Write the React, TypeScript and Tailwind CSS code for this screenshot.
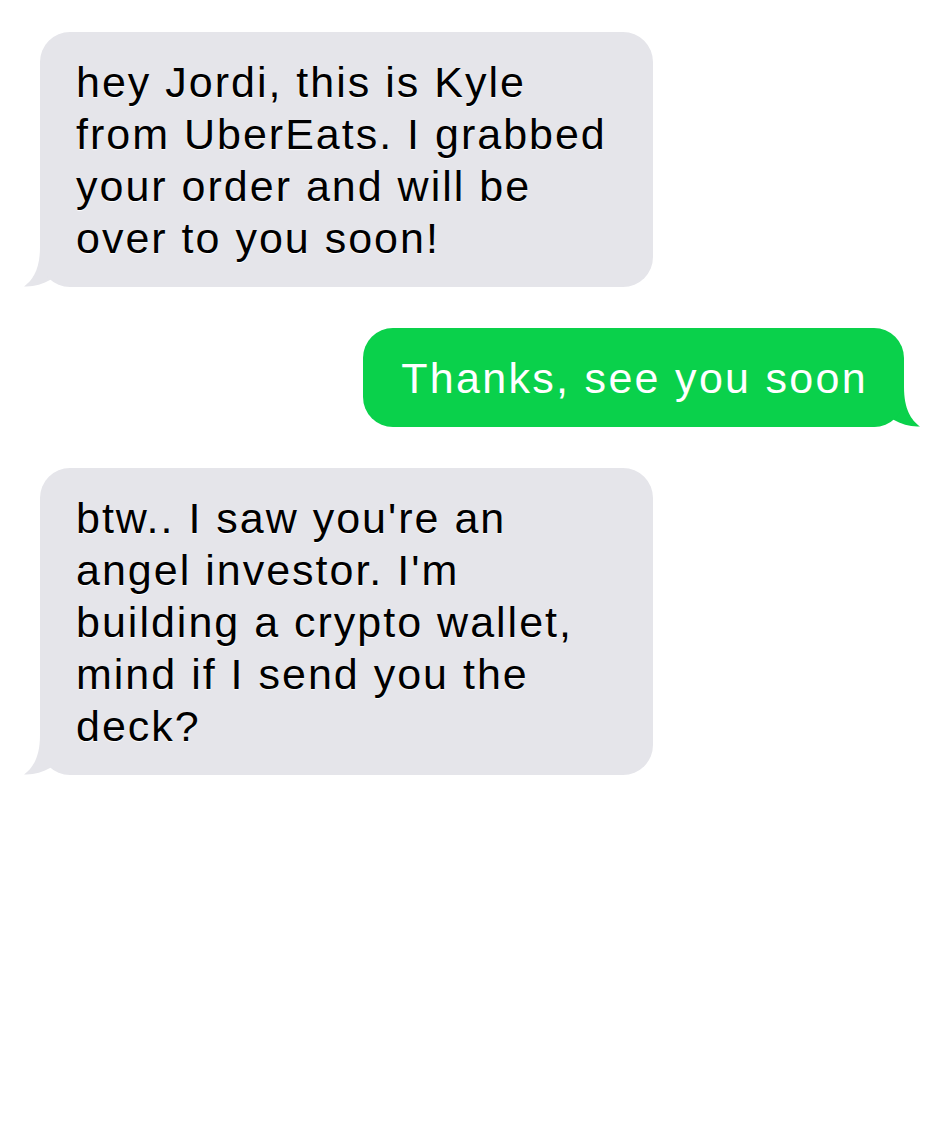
type Msg = { from: "them" | "me"; text: string };

const messages: Msg[] = [
  {
    from: "them",
    text: "hey Jordi, this is Kyle from UberEats. I grabbed your order and will be over to you soon!",
  },
  { from: "me", text: "Thanks, see you soon" },
  {
    from: "them",
    text: "btw.. I saw you're an angel investor. I'm building a crypto wallet, mind if I send you the deck?",
  },
];

// little curved tail under the bubble corner
function Tail({ color, flip }: { color: string; flip?: boolean }) {
  return (
    <svg
      width="70"
      height="44"
      viewBox="0 0 70 44"
      className={flip ? "absolute -right-[20px] bottom-0 -scale-x-100" : "absolute -left-[20px] bottom-0"}
    >
      <path
        d="M20 4 C20 26 13 37 4 43.4 C13 44 22 41.5 31 36.5 C37 41.5 45 44 62 44 L62 0 L20 0 Z"
        fill={color}
      />
    </svg>
  );
}

function Bubble({ msg }: { msg: Msg }) {
  if (msg.from === "me") {
    return (
      <div className="relative self-end w-fit">
        <Tail color="#0ad14b" flip />
        <div className="relative rounded-[30px] bg-[#0ad14b] pl-[38px] pr-[36px] pt-[24px] pb-[23px] tracking-[2.3px] text-white">
          {msg.text}
        </div>
      </div>
    );
  }
  return (
    <div className="relative self-start w-[613px]">
      <Tail color="#e5e5ea" />
      <div className="relative rounded-[30px] bg-[#e5e5ea] pl-[36px] pr-[34px] pt-[24px] pb-[23px] text-black [text-shadow:0_1px_1px_#ffffff]">
        {msg.text}
      </div>
    </div>
  );
}

export default function App() {
  return (
    <div className="min-h-screen bg-white pt-[32px] pl-[40px] pr-[42px] font-['Liberation_Sans',Arial,sans-serif] text-[43px] leading-[52px] tracking-[2px]">
      <div className="flex flex-col gap-[41px]">
        {messages.map((m, i) => (
          <Bubble key={i} msg={m} />
        ))}
      </div>
    </div>
  );
}
